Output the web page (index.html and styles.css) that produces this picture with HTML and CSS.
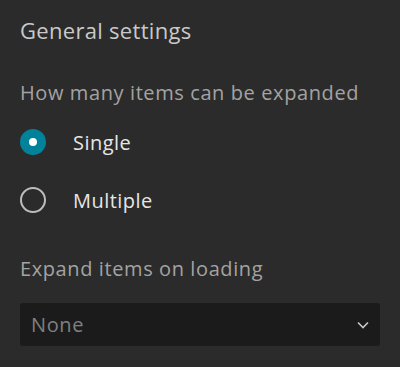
FILE: index.html
```html
<!DOCTYPE html>
<html lang="en">
<head>
    <meta charset="UTF-8">
    <meta name="viewport" content="width=device-width, initial-scale=1.0">
    <title>General settings</title>
    <link rel="stylesheet" href="styles.css">
</head>
<body>
    <div class="panel">
        <h2 class="panel-title">General settings</h2>

        <div class="field">
            <p class="field-label">How many items can be expanded</p>
            <label class="radio">
                <input type="radio" name="expand" checked>
                <span class="radio-mark"></span>
                <span class="radio-text">Single</span>
            </label>
            <label class="radio">
                <input type="radio" name="expand">
                <span class="radio-mark"></span>
                <span class="radio-text">Multiple</span>
            </label>
        </div>

        <div class="field field-select">
            <p class="field-label">Expand items on loading</p>
            <div class="select">
                <span class="select-value">None</span>
                <svg class="select-arrow" width="12" height="8" viewBox="0 0 12 8">
                    <path d="M1 1.5 L6 6.5 L11 1.5" fill="none" stroke="#c8c8c8" stroke-width="1.6"/>
                </svg>
            </div>
        </div>
    </div>
</body>
</html>
```

FILE: styles.css
```css
body {
    margin: 0;
    padding: 0;
    background-color: #2b2b2b;
    font-family: "Open Sans", "Noto Sans", sans-serif;
}

.panel {
    padding: 16px 20px 20px 20px;
}

.panel-title {
    margin: 0;
    font-size: 22px;
    font-weight: normal;
    line-height: 28px;
    letter-spacing: 0.3px;
    color: #c9c9c9;
}

.field {
    margin-top: 36px;
}

.field-label {
    margin: 0 0 7px 0;
    font-size: 20px;
    line-height: 26px;
    letter-spacing: 0.6px;
    color: #a3a3a3;
}

.radio {
    display: flex;
    align-items: center;
    height: 58px;
    cursor: pointer;
}

.radio input {
    display: none;
}

.radio-mark {
    box-sizing: border-box;
    width: 26px;
    height: 26px;
    border-radius: 50%;
    border: 2.5px solid #bdbdbd;
    margin-right: 27px;
}

.radio input:checked + .radio-mark {
    border: 9px solid #00829a;
    background-color: #fff;
}

.radio-text {
    font-size: 20px;
    letter-spacing: 0.45px;
    color: #e6e6e6;
}

.field-select {
    margin-top: 27px;
}

.field-select .field-label {
    margin-bottom: 21px;
}

.select {
    display: flex;
    align-items: center;
    justify-content: space-between;
    height: 43px;
    padding: 0 11px 0 11px;
    background-color: #1b1b1b;
    border-radius: 3px;
}

.select-value {
    font-size: 20px;
    letter-spacing: 0.6px;
    color: #808080;
}
```
